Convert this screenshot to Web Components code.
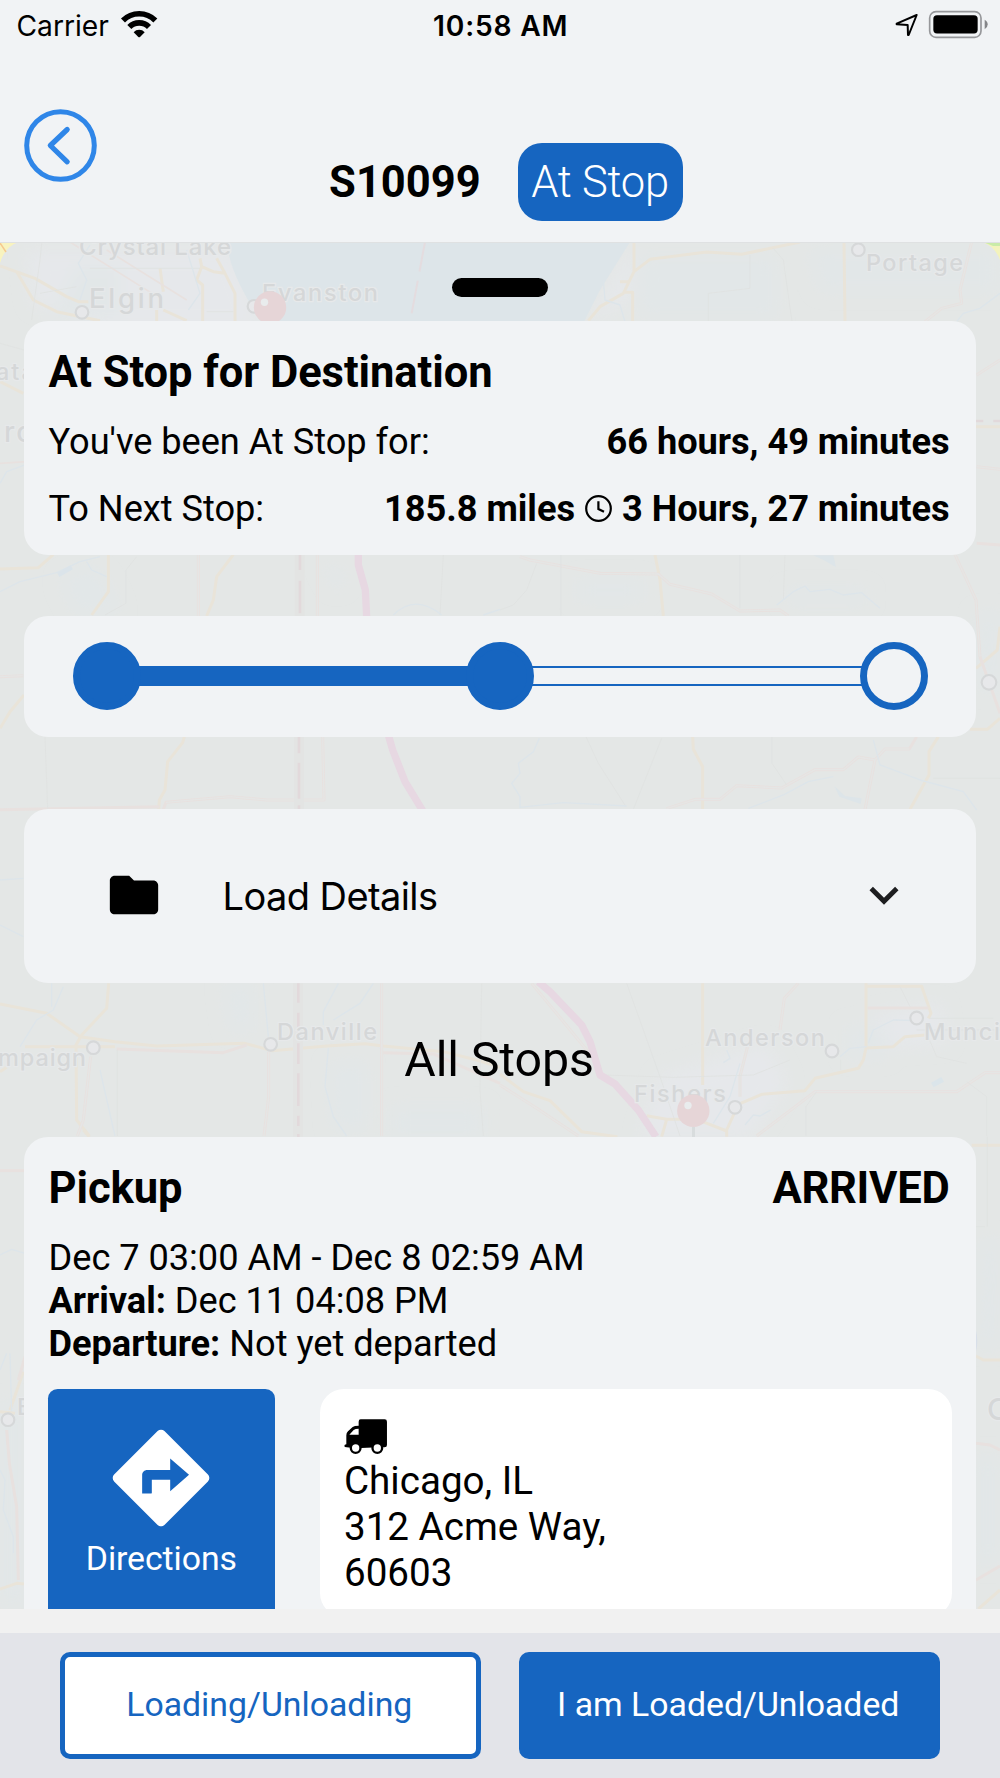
<!DOCTYPE html>
<html lang="en">
<head>
<meta charset="utf-8">
<title>Load S10099</title>
<style>
  html, body { margin: 0; height: 100%; }
  body {
    --blue: #1665c0;
    --surface: #f1f3f5;
    font-family: Roboto, "Liberation Sans", sans-serif;
    color: #000;
    background: #f1f1f1;
    overflow: hidden;
  }
</style>
</head>
<body>
<load-screen>
  <status-bar slot="top" carrier="Carrier" time="10:58 AM"></status-bar>
  <load-header slot="top"><span>S10099</span><status-pill slot="status">At Stop</status-pill></load-header>
  <route-map slot="map"></route-map>

  <info-card class="summary">
    <card-title>At Stop for Destination</card-title>
    <stat-row><span>You've been At Stop for:</span><b slot="value">66 hours, 49 minutes</b></stat-row>
    <stat-row><span>To Next Stop:</span><b slot="value">185.8 miles</b><app-icon slot="value" name="clock"></app-icon><b slot="value">3 Hours, 27 minutes</b></stat-row>
  </info-card>
  <trip-progress></trip-progress>
  <detail-toggle>Load Details</detail-toggle>
  <section-heading>All Stops</section-heading>
  <stop-card>
    <card-title>Pickup<span slot="end">ARRIVED</span></card-title>
    <div slot="times">Dec 7 03:00 AM - Dec 8 02:59 AM</div>
    <div slot="times"><b>Arrival:</b> Dec 11 04:08 PM</div>
    <div slot="times"><b>Departure:</b> Not yet departed</div>
    <div slot="address">Chicago, IL</div>
    <div slot="address">312 Acme Way,</div>
    <div slot="address">60603</div>
  </stop-card>

  <action-button slot="actions" outline>Loading/Unloading</action-button>
  <action-button slot="actions">I am Loaded/Unloaded</action-button>
</load-screen>

<script>
const define = (name, html, setup) => customElements.define(name, class extends HTMLElement {
  constructor() {
    super();
    const t = document.createElement('template');
    t.innerHTML = html;
    this.attachShadow({ mode: 'open' }).append(t.content.cloneNode(true));
  }
  connectedCallback() { if (setup) setup(this, this.shadowRoot); }
});

const ICONS = {
  clock: [27, 27, '0 0 27 27', '<circle cx="13.5" cy="13.5" r="12.3" fill="none" stroke="#000" stroke-width="2.2"/><path d="M13.4 6.2V14L19 16.8" fill="none" stroke="#000" stroke-width="2.2"/>'],
  folder: [58, 58, '0 0 24 24', '<path d="M10 4H4c-1.1 0-2 .9-2 2v12c0 1.1.9 2 2 2h16c1.1 0 2-.9 2-2V8c0-1.1-.9-2-2-2h-8z"/>'],
  chevron: [58, 58, '0 0 24 24', '<path fill="#1d1d1f" d="M7.41 8.58 12 13.17l4.59-4.59L18 10l-6 6-6-6z"/>'],
  directions: [116, 116, '0 0 24 24', '<path fill="#fff" fill-rule="evenodd" d="M21.71 11.29l-9-9a.996.996 0 0 0-1.41 0l-9 9a.996.996 0 0 0 0 1.41l9 9c.39.39 1.02.39 1.41 0l9-9a.996.996 0 0 0 0-1.41zM13.9 14.75v-2.4H10.1V15.1q0 .1-.1.1H8.1V11.4c0-.6.45-1.05 1.05-1.05h4.75V7.95l3.9 3.4z"/>'],
  truck: [43.3, 35, '1034 118 130 105', '<path fill-rule="evenodd" d="M1084 119h72q7 0 7 7v70q0 7-7 7h-18l-70 3-26-3q-7 0-7-4 0-4 6-5v-27q0-7 5-12l14-13q5-4 18-4v-12q0-7 6-7zM1050 165h28v-18q-10 0-15 4z"/><circle cx="1069" cy="205" r="14.5" fill="#fff" stroke="#000" stroke-width="7"/><circle cx="1134" cy="205" r="14.5" fill="#fff" stroke="#000" stroke-width="7"/>'],
  wifi: [38, 28, '358 28 114 84', '<g fill="none" stroke="#000" stroke-width="17"><path d="M367 59.500A68.500 68.500 0 0 1 464 59.500"/><path d="M386 79A41 41 0 0 1 445 79"/></g><path d="M399 95A22 22 0 0 1 432 95L418 109Q415.500 111 413 109Z"/>'],
  location: [24, 24, '1185 38 72 72', '<path d="M1250 44 1190 70 1190 72 1223 74 1224 104 1226 104Z" fill="none" stroke="#000" stroke-width="6" stroke-linejoin="round"/>'],
  battery: [61, 29, '1282 29 183 87', '<rect x="1287" y="34" width="154" height="77" rx="19" fill="none" stroke="#96979a" stroke-width="5"/><rect x="1298" y="44.500" width="133" height="55" rx="11"/><path fill="#858689" d="M1452 58q9 5 9 14.500t-9 14.500z"/>'],
  back: [73, 73, '0 0 73 73', '<g fill="none" stroke="#2f86e8"><circle cx="36.500" cy="36.500" r="33.800" stroke-width="5"/><path d="M43.200 20.500 26.300 36.500 43.200 52.800" stroke-width="5.200" stroke-linecap="round" stroke-linejoin="round"/></g>']
};

define('app-icon', '<style>:host{display:block;flex:none}svg{display:block}</style><div></div>', (el, root) => {
  const [w, h, box, art] = ICONS[el.getAttribute('name')];
  root.querySelector('div').innerHTML = `<svg width="${w}" height="${h}" viewBox="${box}">${art}</svg>`;
});

define('load-screen', `<style>
  :host{display:flex;flex-direction:column;width:1000px;height:1778px;overflow:hidden}
  header{height:242px;flex:none;background:var(--surface)}
  .stage{position:relative;height:1366.700px;flex:none;overflow:hidden}
  .map{position:absolute;inset:0}
  .sheet{position:relative;display:flex;flex-direction:column;padding:35.700px 24px 0;align-items:stretch}
  .grip{align-self:center;width:96.600px;height:19.300px;border-radius:10px;background:#000;margin-bottom:24px}
  footer{margin-top:24.300px;flex:1;box-sizing:border-box;background:#e3e4e9;display:flex;gap:38.600px;align-items:flex-start;padding:19.300px 60.300px}
</style>
<header><slot name="top"></slot></header>
<div class="stage"><div class="map"><slot name="map"></slot></div><main class="sheet"><div class="grip"></div><slot></slot></main></div>
<footer><slot name="actions"></slot></footer>`);

define('status-bar', `<style>
  :host{display:grid;grid-template-columns:1fr auto 1fr;align-items:center;height:51px;padding:0 11px 0 16.500px;font:28.200px/34px Inter,"Liberation Sans",sans-serif}
  div{display:flex;align-items:center}
  .l{gap:11px}.r{justify-content:flex-end;gap:9px}
  .l app-icon{margin-top:-4px}.r app-icon{margin-top:-2px}
  b{font-weight:600;letter-spacing:.800px;margin-left:-4px}
</style><div class="l"><span></span><app-icon name="wifi"></app-icon></div><b></b><div class="r"><app-icon name="location"></app-icon><app-icon name="battery"></app-icon></div>`,
(el, root) => {
  root.querySelector('span').textContent = el.getAttribute('carrier');
  root.querySelector('b').textContent = el.getAttribute('time');
});

define('load-header', `<style>
  :host{display:grid;grid-template-columns:1fr auto 1fr;height:191px;padding:0 24px;box-sizing:border-box}
  .back{padding-top:57.500px}
  .title{display:flex;align-items:center;gap:37.500px;height:78px;margin-top:92px;padding-left:12px;font-weight:700;font-size:43.500px}
</style><div class="back"><app-icon name="back"></app-icon></div><div class="title"><slot></slot><slot name="status"></slot></div><div></div>`);

define('status-pill', `<style>
  :host{display:flex;align-items:center;justify-content:center;width:164.700px;height:77.500px;border-radius:24px;background:var(--blue);color:#fff;font-weight:300;font-size:43.500px;letter-spacing:-.250px;padding-right:1px;box-sizing:border-box}
</style><slot></slot>`);

define('info-card', `<style>
  :host{display:flex;flex-direction:column;gap:23.500px;height:234px;padding:24px 26.500px 0 24.500px;box-sizing:border-box;background:var(--surface);border-radius:24px}
  ::slotted(card-title){margin:1px 0 -2px}
</style><slot></slot>`);

define('card-title', `<style>
  :host{display:flex;justify-content:space-between;font-weight:700;font-size:43.500px;line-height:53px;letter-spacing:-.050px}
  ::slotted(*){letter-spacing:-.250px}
</style><span><slot></slot></span><slot name="end"></slot>`);

define('stat-row', `<style>
  :host{display:flex;justify-content:space-between;font-size:36.200px;line-height:43.300px;letter-spacing:-.030px}
  div{display:flex;align-items:center;gap:10px}
</style><slot></slot><div><slot name="value"></slot></div>`);

define('trip-progress', `<style>
  :host{display:flex;align-items:center;height:121px;margin-top:61px;padding:0 48.500px 1px;box-sizing:border-box;background:var(--surface);border-radius:24px}
  i{width:68px;height:68px;box-sizing:border-box;border-radius:50%;border:7.300px solid var(--blue);flex:none;position:relative}
  .done{background:var(--blue)}
  u{flex:1;height:19.300px;box-sizing:border-box;border:solid var(--blue);border-width:2px 0;margin:0 -2px}
</style><i class="done"></i><u class="done"></u><i class="done"></i><u></u><i></i>`);

define('detail-toggle', `<style>
  :host{display:flex;align-items:center;height:174px;margin-top:72px;padding:0 63px 0 81px;box-sizing:border-box;background:var(--surface);border-radius:24px;font:38px/46px Inter,"Liberation Sans",sans-serif;letter-spacing:-.580px}
  span{flex:1;margin-left:59.500px}
  app-icon{margin-top:-1px}
</style><app-icon name="folder"></app-icon><span><slot></slot></span><app-icon name="chevron"></app-icon>`);

define('section-heading', `<style>
  :host{display:flex;align-items:center;justify-content:center;height:154px;font-size:48.300px;letter-spacing:-.120px;padding-right:2px}
</style><slot></slot>`);

define('stop-card', `<style>
  :host{display:flex;flex-direction:column;gap:23.500px;padding:24px 24px 40px;background:var(--surface);border-radius:24px}
  ::slotted(card-title){margin:1px 2.500px -1px .500px}
  .times{font-size:36.200px;line-height:42.600px;padding-left:.500px;letter-spacing:-.030px}
  .row{display:flex;justify-content:space-between;align-items:flex-start}
  .go{display:flex;flex-direction:column;align-items:center;width:226.700px;height:260px;border-radius:9.600px;margin-top:.500px;background:var(--blue);color:#fff;box-sizing:border-box;padding-top:30.500px;font-size:33.800px;line-height:46.500px;letter-spacing:-.080px}
  .addr{width:632px;height:228px;box-sizing:border-box;border-radius:24px;background:#fff;padding:30px 24px;font-size:38.600px;line-height:45.900px}
  .addr app-icon{margin-bottom:4.200px}
</style><slot></slot>
<div class="times"><slot name="times"></slot></div>
<div class="row"><div class="go"><app-icon name="directions"></app-icon><span>Directions</span></div>
<div class="addr"><app-icon name="truck"></app-icon><slot name="address"></slot></div></div>`);

define('action-button', `<style>
  :host{display:flex;align-items:center;justify-content:center;flex:1;height:106.500px;box-sizing:border-box;border:5px solid var(--blue);border-radius:10px;background:var(--blue);color:#fff;font-size:33.800px;padding:0 2.500px 2px 0}
  :host([outline]){background:#fff;color:var(--blue)}
</style><slot></slot>`);

/* Map geometry is kept in tiles of 1500 units across 500px, one group per tile. */
define('route-map', `<style>
  :host{display:block}
  svg{display:block}
  g.t{fill:none;stroke-linejoin:round}
  .y{stroke:#e9e4d9;stroke-width:9}
  .p{stroke:#e8e1df;stroke-width:9}
  .p2{stroke:#e5e6e5;stroke-width:4}
  .k{stroke:#e0e2e1;stroke-width:2.500}
  .r{stroke:#dde5ea;stroke-width:4}
  .w{fill:#dde5e9}
  .u{fill:#e6e8eb}
  .s{fill:#e2e7e8}
  .route{stroke:#e7d8e2;stroke-width:22}
  .d{stroke:#e2d9db;stroke-width:8}
  .halo{stroke:#e3e4e3;stroke-width:30}
  .c{fill:#e7e8ea;stroke:#d6d8d9;stroke-width:6.500}
  text{font-family:Inter,"Liberation Sans",sans-serif;font-weight:500;fill:#d5d7d8;stroke:#e7e9ea;stroke-width:2.500;paint-order:stroke}
</style>
<svg width="1000" height="1367" viewBox="0 242 1000 1367">
  <defs><filter id="b" x="-30%" y="-30%" width="160%" height="160%"><feGaussianBlur stdDeviation="26"/></filter></defs>
  <rect y="242" width="1000" height="1367" fill="#e4e7e6"/>
  <g class="t" transform="translate(0 230) scale(.33333)">
    <g filter="url(#b)"><path class="u" d="M80 60H700L790 300H280L100 220Z"/><path class="s" d="M230 110h130v150H150z"/></g>
    <path class="w" d="M640 36H1500V290H790C740 200 690 130 680 36Z"/>
    <path class="y" d="M0 108 105 145 200 200 235 215H265M50 125 100 210 170 245 300 272M480 115 490 185M470 240V275M490 240 560 272M600 85 605 110 590 150 608 165V275M605 110 640 125 675 130M650 85 675 130 705 190V275M0 455 70 490"/>
    <path class="p" style="stroke-width:5" d="M210 36 480 205M320 60 560 210M0 700 80 695"/>
    <path class="k" d="M125 40 120 90 95 270M270 115H600M120 190 230 170M0 340 90 365M620 245H700"/>
    <path class="r" d="M270 45 235 100 260 150 240 210M560 60 600 190 565 240M0 760 20 725 75 705"/>
    <path stroke="#e4dcdf" stroke-width="6" stroke-dasharray="90 28 110" d="M1275 36 1235 250"/>
    <circle class="c" cx="246" cy="247" r="19"/><circle class="c" cx="762" cy="229" r="19"/>
  </g>
  <g class="t" transform="translate(500 230) scale(.33333)">
    <g filter="url(#b)"><path class="u" d="M400 36 270 280 390 200Z"/><path class="s" d="M410 80h420v180H420zM930 60h570v120h-540z"/></g>
    <path class="w" d="M0 36H390L300 180 252 275H0Z"/>
    <path class="y" d="M402 36V125L450 88 620 66 725 73 900 36M402 125 370 190 300 230 265 272M360 155H390M375 187H398V275M1032 36 1035 275M1428 590H1500"/>
    <path class="p" d="M1415 36 1380 180 1385 220 1325 235 1275 275M1430 435 1500 390M1430 710 1500 718M1430 940 1500 945"/>
    <path class="p2" d="M1415 36 1380 180 1385 220 1325 235 1275 275M1430 435 1500 390M1430 710 1500 718"/>
    <path class="k" d="M750 75V175L625 190V275M820 55 850 90 876 275"/>
    <path class="r" d="M310 150 315 210 360 225 375 275M1500 190 1440 235 1390 250 1370 275"/>
    <path class="d" d="M1428 573H1450M1480 573H1500"/>
    <circle class="c" cx="1075" cy="59" r="19"/>
  </g>
  <g class="t" transform="translate(0 550) scale(.33333)">
    <path class="s" d="M180 90 250 50 300 70 330 120 360 190H230Z M960 30 1040 80 1010 120Z" filter="url(#b)"/>
    <path class="y" d="M0 57 115 53 160 14M325 14V125L275 195M700 14 650 80 640 150 620 198M72 435 30 485 0 535M553 560 548 578 503 635 495 720 478 750 476 778"/>
    <path class="p" d="M595 14V198M952 14V198M0 380 70 377M968 560 972 750H800L690 740 498 757 490 778M0 779 478 770"/>
    <path class="p2" d="M595 14V198M952 14V198M0 380 70 377M968 560 972 750H800L690 740 498 757"/>
    <path class="k" d="M1330 14 1320 195M135 560 143 778M410 20 378 60V160L315 195"/>
    <path class="r" d="M0 125 60 95 170 68 240 35 300 20M260 35 275 60 320 80M1180 195Q1245 130 1325 195M1450 195 1500 178"/>
    <path d="M175 75 215 52" stroke="#dbe4ea" stroke-width="14"/>
    <path class="halo" d="M899 14V198M897 560V778"/>
    <path class="d" d="M900 14V60M900 92V190M897 560V610M897 638V746M897 766V778"/>
    <path class="route" d="M1075 10V45L1096 120 1100 200M1165 555 1178 600 1215 695 1268 782"/>
  </g>
  <g class="t" transform="translate(500 550) scale(.33333)">
    <path class="s" d="M230 90H430V150H230ZM860 120H1100V160H860ZM1430 190H1500V420H1440Z" filter="url(#b)"/>
    <path class="y" d="M465 14 480 90 490 198M1500 230 1492 300 1428 355M1410 538H1462L1500 505M578 560 580 598 608 650V778M1315 560 1287 605V675L1230 778"/>
    <path class="p" d="M60 20 90 30 300 70 475 72 510 103 635 132 720 183 840 180 865 198M1365 14 1428 150 1440 320 1500 490M500 776 585 748H660L710 707 845 714 945 659H1030L1075 621 1125 630 1155 597H1228L1250 560M1125 630 1095 778"/>
    <path class="p2" d="M60 20 90 30 300 70 475 72 510 103 635 132 720 183 840 180 865 198M1365 14 1428 150 1440 320M500 776 585 748H660L710 707 845 714 945 659H1030L1075 621 1125 630 1155 597H1228M1125 630 1095 778"/>
    <path class="k" d="M183 14V198M720 14V175M855 14 850 150M258 560 295 640 378 770M485 565 400 778M816 560V640L860 705M1300 685H1500M0 180 40 165 80 120 110 40"/>
    <path class="r" d="M830 165 880 125 915 108 930 125 990 118 1030 135 1085 128 1140 175M118 565 100 605 55 640 60 670 35 700 60 740 60 775M60 772 190 758 380 768M745 775 850 735 925 695 1000 680M1120 570 1140 645 1260 690 1390 725 1430 780"/>
    <path class="w" d="M940 16H1000L1008 52 975 32ZM1003 708 1018 740 1082 762 1085 745 1035 738Z"/>
    <circle class="c" cx="1467" cy="397" r="22"/>
  </g>
  <g class="t" transform="translate(0 830) scale(.33333)">
    <path class="s" d="M670 460H760V600H690ZM990 700H1100V900H1000ZM1170 830H1450V925H1170Z" filter="url(#b)"/>
    <path class="y" d="M0 522 140 550 240 620 345 635 470 648 735 640 815 662 980 648 1095 641 1150 648 1330 665 1430 690 1500 712M75 650H345M326 460 320 535 245 615 228 645 230 870 268 918M0 725 20 712"/>
    <path class="p" d="M272 680 250 870 232 918M350 657 670 668 740 645M806 665V800L792 918M1145 460V918M1150 668 1300 672 1500 760"/>
    <path class="p2" d="M272 680 250 870 232 918M806 665V800L792 918M1145 460V918"/>
    <path class="k" d="M352 660V918M1445 460 1440 780 1450 918"/>
    <path class="r" d="M0 150 70 145M0 285 70 320M190 470 160 540 110 570 60 650M155 460V530M790 460 805 620M1015 460 970 545V585M1120 460 1080 520 1000 570M985 655 975 770 1000 860 1040 918M300 720 325 830 345 918"/>
    <path class="halo" d="M894 460V920"/><path class="d" d="M895 460V518M895 548V610M895 640V702M895 730V828M895 857V888M895 912V924"/>
    <circle class="c" cx="280" cy="653" r="19"/><circle class="c" cx="812" cy="643" r="19"/>
  </g>
  <g class="t" transform="translate(500 830) scale(.33333)">
    <g filter="url(#b)"><path class="u" d="M480 740 800 640 860 760 750 925H420ZM1110 560 1320 520 1340 640 1150 650Z"/><path class="s" d="M1040 590H1160V680H1040Z"/></g>
    <path class="y" d="M0 732 70 785 150 812 245 905 352 920M608 460V765M1098 460V655L1090 690 1075 715 945 745 915 782 785 793 715 823 680 900M1100 469H1265L1293 550 1285 565M1098 654 1180 650 1215 620 1275 615M440 857 500 868H590L680 903V920M500 868 485 920"/>
    <path class="p" d="M95 460 285 690M0 765 110 835 235 918M895 460 853 505 840 600M770 918 945 785H1370L1455 728H1500M745 640 720 740V800M1103 534H1285"/>
    <path class="p2" d="M95 460 285 690M0 765 110 835 235 918M895 460 853 505 840 600M770 918 945 785H1370L1455 728H1500M745 640 720 740V800"/>
    <path class="k" d="M380 460 480 740 540 918M310 735 520 742 760 735 870 690M1200 470 1230 530M1250 600H1500M1280 610 1310 680 1400 700M1022 690V720M918 918V830L950 785M1400 755 1460 800V918M1290 565H1480"/>
    <path class="r" d="M680 660 690 685 670 698M1105 640 1120 600 1180 570 1260 572M1020 680 1050 655 1100 650M640 880 690 800 720 700M735 885 760 855 780 858 812 840"/>
    <path d="M1297 765 1328 748" stroke="#dbe5ea" stroke-width="16"/>
    <path class="route" d="M115 455 150 485 245 585 270 635 300 735 345 762 415 840 468 920"/>
    <circle class="c" cx="705" cy="832" r="19"/><circle class="c" cx="996" cy="663" r="19"/><circle class="c" cx="1250" cy="564" r="19"/>
  </g>
  <g class="t" transform="translate(0 1130) scale(.33333)">
    <path class="s" filter="url(#b)" d="M0 820H74V1437H0Z"/>
    <path class="y" d="M70 725 30 840M250 0 268 20"/><path class="p" d="M0 122H72"/>
    <path class="r" d="M0 375 35 358 75 370M20 670 0 720M30 670 35 850"/>
    <path class="p" d="M20 900 28 1000 50 1130 55 1350M55 750 75 680"/><path class="r" d="M0 1020 15 1050 10 1140 40 1220V1270"/><path class="y" d="M0 1377 50 1360 72 1362M0 845 45 850"/>
    <circle class="c" cx="24" cy="869" r="19"/>
  </g>
  <g class="t" transform="translate(500 1130) scale(.33333)">
    <path class="s" filter="url(#b)" d="M1440 330H1500V650H1430Z M1428 980H1500V1300H1428Z"/>
    <path class="y" d="M1415 46H1500M1428 678 1450 690H1500M1435 1437 1500 1380"/><path class="k" d="M1462 20V290M1428 290H1455"/>
    <path class="p" d="M1428 940 1470 945 1500 960M1428 1350 1500 1308"/><path fill="#d8dfe9" d="M1427 598q10 36 0 72z"/>
  </g>
  <g>
    <text x="79" y="254.500" font-size="24" textLength="152">Crystal Lake</text>
    <text x="89" y="307.500" font-size="27.500" font-weight="600" textLength="75">Elgin</text>
    <text x="262" y="301" font-size="23.500" textLength="116">Evanston</text>
    <text x="866" y="270.500" font-size="23.500" textLength="97">Portage</text>
    <text x="-4" y="380" font-size="23.500" letter-spacing="2">ata</text>
    <text x="4" y="441.500" font-size="28" letter-spacing="2">ro</text>
    <text x="277" y="1039.500" font-size="23.500" textLength="100">Danville</text>
    <text x="-2" y="1066" font-size="23.500" textLength="88">mpaign</text>
    <text x="705" y="1046" font-size="23.500" textLength="120">Anderson</text>
    <text x="924" y="1039.500" font-size="23.500" textLength="76">Munci</text>
    <text x="634" y="1102" font-size="23.500" textLength="92">Fishers</text>
    <text x="17" y="1414.500" font-size="23.500">E</text>
    <text x="987" y="1420" font-size="30">C</text>
  </g>
  <g fill="#e6d5d7"><circle cx="270" cy="307.500" r="16.200"/><circle cx="693.300" cy="1110.800" r="16.200"/></g>
  <g fill="#e9eced"><circle cx="264.500" cy="302.300" r="3.700"/><circle cx="688" cy="1105.500" r="3.700"/></g>
  <path d="M693.500 1127V1138" stroke="#d8dcdd" stroke-width="3"/>
  <path fill="#f8f3bf" d="M0 242H19Q5 246 0 263Z"/><path d="M0 243 6 252" stroke="#f5c98f" stroke-width="1.500"/>
  <path fill="#f3f3bd" d="M1000 242H982Q995 246 1000 260Z"/><path fill="#c9eba9" d="M1000 242H983L993 246H1000Z"/>
  <path d="M0 242.500H1000" stroke="#dfe1e2"/>
</svg>`);
</script>
</body>
</html>
